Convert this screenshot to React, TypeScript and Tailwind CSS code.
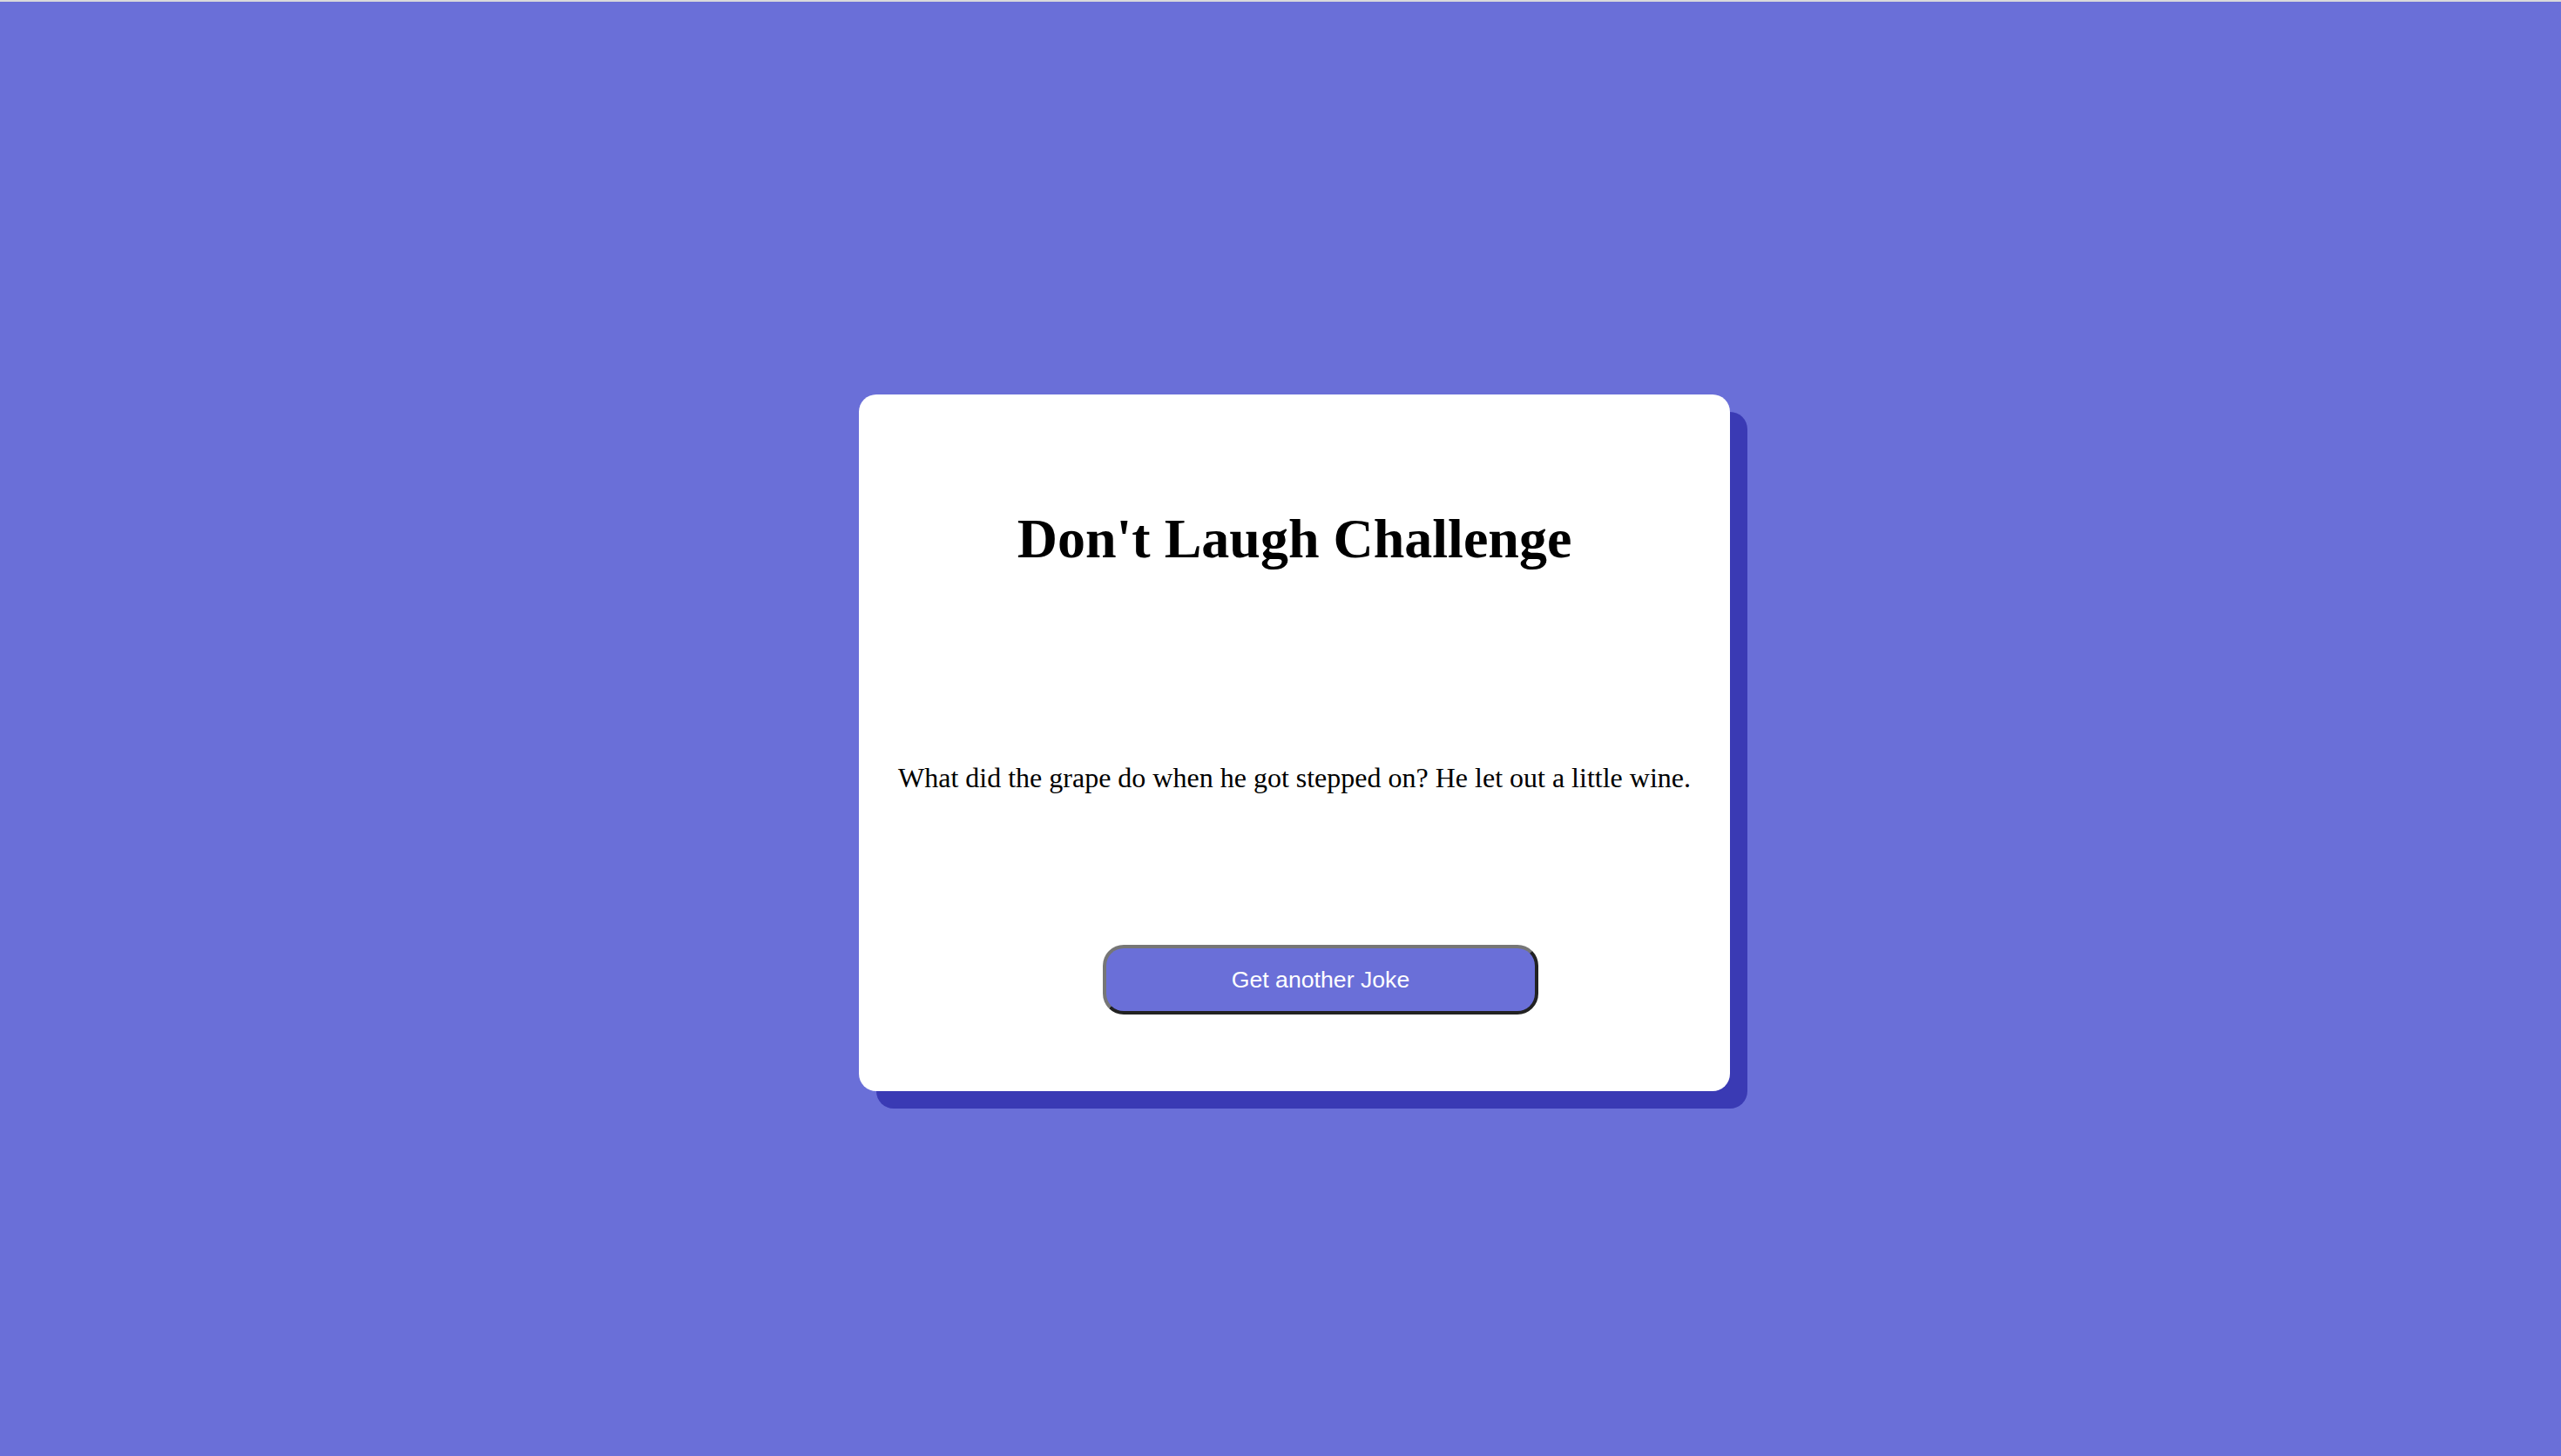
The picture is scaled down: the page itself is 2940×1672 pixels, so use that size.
import React, { useState } from "react";

const JOKES = [
  "What did the grape do when he got stepped on? He let out a little wine.",
  "Why don't skeletons fight each other? They don't have the guts.",
  "I only know 25 letters of the alphabet. I don't know y.",
];

export default function App() {
  const [index, setIndex] = useState(0);

  return (
    <div className="min-h-screen w-full border-t-2 border-[#d9d9db] bg-[#6a6fd8] pt-[32px] pl-[32px] flex items-center justify-center font-['Liberation_Serif',serif]">
      {/* Card */}
      <div className="w-[1000px] h-[800px] bg-white rounded-[20px] shadow-[20px_20px_0_0_#3a3ab4] flex flex-col items-center pt-[129px]">
        <h1 className="text-[64px] leading-[74px] font-bold text-black">
          Don't Laugh Challenge
        </h1>

        <p className="mt-[219px] text-[32px] leading-[37px] text-black text-center">
          {JOKES[index]}
        </p>

        <button
          onClick={() => setIndex((i) => (i + 1) % JOKES.length)}
          className="mt-[173px] ml-[60px] w-[500px] h-[80px] rounded-[24px] border-4 border-t-[#767676] border-l-[#767676] border-b-[#222222] border-r-[#222222] bg-[#6a6fd8] text-white text-[26.67px] font-['Liberation_Sans',Arial,sans-serif]"
        >
          Get another Joke
        </button>
      </div>
    </div>
  );
}
